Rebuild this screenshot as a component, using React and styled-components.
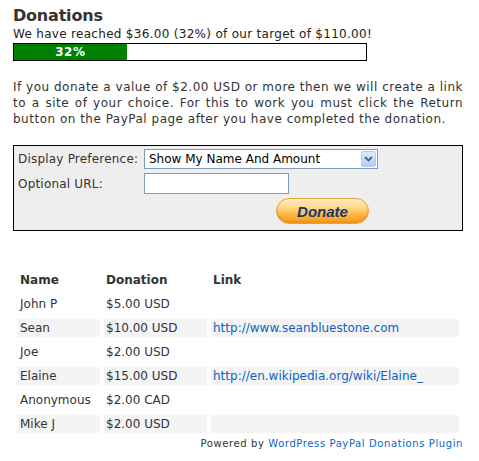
import React from "react";
import styled, { createGlobalStyle } from "styled-components";

const GlobalStyle = createGlobalStyle`
  body {
    margin: 0;
    background: #fff;
    font-family: "DejaVu Sans", Verdana, sans-serif;
    color: #333;
  }
`;

const donations = [
  { name: "John P", amount: "$5.00 USD", link: "" },
  { name: "Sean", amount: "$10.00 USD", link: "http://www.seanbluestone.com" },
  { name: "Joe", amount: "$2.00 USD", link: "" },
  { name: "Elaine", amount: "$15.00 USD", link: "http://en.wikipedia.org/wiki/Elaine_" },
  { name: "Anonymous", amount: "$2.00 CAD", link: "" },
  { name: "Mike J", amount: "$2.00 USD", link: "" },
];

const App = () => {
  const raised = 36;
  const target = 110;
  const percent = Math.floor((raised / target) * 100);

  return (
    <Page>
      <GlobalStyle />
      <Title>Donations</Title>
      <Reached>
        We have reached $36.00 ({percent}%) of our target of $110.00!
      </Reached>
      <Progress>
        <ProgressFill style={{ width: `${percent}%` }}>{percent}%</ProgressFill>
      </Progress>

      <Intro>
        If you donate a value of $2.00 USD or more then we will create a link
        to a site of your choice. For this to work you must click the Return
        button on the PayPal page after you have completed the donation.
      </Intro>

      <FormBox>
        <Label>Display Preference:</Label>
        <Select>
          <span>Show My Name And Amount</span>
          <SelectArrow>
            <svg width="9" height="6" viewBox="0 0 9 6">
              <path d="M1 1 L4.5 4.5 L8 1" fill="none" stroke="#4d6185" strokeWidth="1.8" />
            </svg>
          </SelectArrow>
        </Select>
        <Label>Optional URL:</Label>
        <UrlInput type="text" />
        <DonateButton type="button">Donate</DonateButton>
      </FormBox>

      <Table>
        <thead>
          <tr>
            <Th $w={78}>Name</Th>
            <Th $w={99}>Donation</Th>
            <Th>Link</Th>
          </tr>
        </thead>
        <tbody>
          {donations.map((d, i) => (
            <Row key={d.name} $alt={i % 2 === 1}>
              <Td>{d.name}</Td>
              <Td>{d.amount}</Td>
              <Td>{d.link && <Link href="#">{d.link}</Link>}</Td>
            </Row>
          ))}
        </tbody>
      </Table>

      <Powered>
        Powered by <Link href="#">WordPress PayPal Donations Plugin</Link>
      </Powered>
    </Page>
  );
};

const Page = styled.div`
  width: 450px;
  padding: 6px 16px 0 13px;
`;

const Title = styled.h2`
  margin: 0;
  font-size: 16px;
  line-height: 20px;
  font-weight: bold;
  letter-spacing: -0.2px;
  color: #333;
`;

const Reached = styled.div`
  font-size: 12px;
  line-height: 16px;
  letter-spacing: 0.3px;
  color: #222;
`;

const Progress = styled.div`
  width: 352px;
  height: 16px;
  border: 1px solid #000;
  margin-top: 1px;
`;

const ProgressFill = styled.div`
  height: 100%;
  background: #008000;
  color: #fff;
  font-size: 12px;
  font-weight: bold;
  line-height: 16px;
  letter-spacing: 0.5px;
  text-align: center;
`;

const Intro = styled.p`
  margin: 18px 0 0;
  font-size: 12px;
  line-height: 16px;
  letter-spacing: 0.5px;
  text-align: justify;
`;

const FormBox = styled.div`
  margin-top: 18px;
  border: 1px solid #000;
  background: #eee;
  padding: 3px 4px 6px;
  display: grid;
  grid-template-columns: 122px auto;
  column-gap: 4px;
  row-gap: 4px;
  align-items: center;
`;

const Label = styled.div`
  font-size: 12px;
  letter-spacing: 0.2px;
  white-space: nowrap;
  color: #333;
`;

const Select = styled.div`
  width: 228px;
  height: 18px;
  border: 1px solid #7f9db9;
  background: #fff;
  display: flex;
  align-items: center;
  justify-content: space-between;
  padding-left: 4px;
  box-sizing: content-box;
  font-family: "DejaVu Sans", Tahoma, sans-serif;
  font-size: 12px;
  color: #000;
`;

const SelectArrow = styled.div`
  width: 15px;
  height: 16px;
  margin-right: 1px;
  border: 1px solid #b9c9ef;
  border-radius: 2px;
  background: linear-gradient(#dfe8fd, #b8cbf7);
  display: flex;
  align-items: center;
  justify-content: center;
  box-sizing: border-box;
`;

const UrlInput = styled.input`
  width: 145px;
  height: 21px;
  box-sizing: border-box;
  border: 1px solid #7f9db9;
  background: #fff;
  margin: 0;
  padding: 0 3px;
`;

const DonateButton = styled.button`
  grid-column: 2;
  margin-left: 132px;
  width: 93px;
  height: 26px;
  border: 1px solid #f0a030;
  border-radius: 13px;
  background: linear-gradient(#ffefc4 0%, #ffd98a 35%, #fbb03b 70%, #f59f1e 100%);
  box-shadow: inset 0 -2px 2px rgba(230, 130, 20, 0.5);
  font-family: "Liberation Sans", Arial, sans-serif;
  font-size: 15px;
  font-weight: bold;
  font-style: italic;
  color: #1b3770;
  padding: 0;
  cursor: pointer;
`;

const Table = styled.table`
  margin: 34px 0 0 1px;
  width: 449px;
  border-spacing: 4px 6px;
  font-size: 12px;
`;

const Th = styled.th`
  text-align: left;
  font-weight: bold;
  height: 18px;
  padding: 0 2px;
  width: ${(p) => (p.$w ? `${p.$w}px` : "auto")};
  color: #333;
`;

const Row = styled.tr`
  td {
    background: ${(p) => (p.$alt ? "#f4f4f4" : "transparent")};
  }
`;

const Td = styled.td`
  height: 18px;
  padding: 0 2px;
  color: #333;
  white-space: nowrap;
`;

const Link = styled.a`
  color: #0b63c5;
  text-decoration: none;
`;

const Powered = styled.div`
  margin-top: -1px;
  text-align: right;
  font-size: 10px;
  letter-spacing: 0.6px;
  color: #333;
`;

export default App;
